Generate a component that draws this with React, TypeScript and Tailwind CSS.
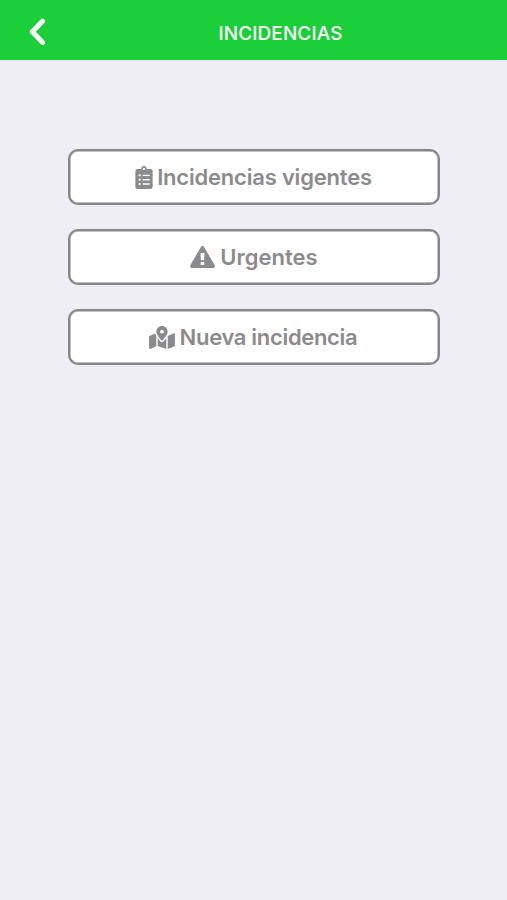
import { FaClipboardList, FaMapMarkedAlt } from "react-icons/fa";

const WarningIcon = ({ className }: { className?: string }) => (
  <svg viewBox="0 0 25 22" className={className} fill="currentColor">
    <path
      fillRule="evenodd"
      d="M10.9.9a1.8 1.8 0 0 1 3.2 0l10.6 18.4a1.8 1.8 0 0 1-1.6 2.7H1.9a1.8 1.8 0 0 1-1.6-2.7ZM10.5 7l.4 7.2h3.2l.4-7.2ZM10.7 15.9v3.2h3.6v-3.2Z"
    />
  </svg>
);

const options = [
  {
    label: "Incidencias vigentes",
    icon: FaClipboardList,
    iconClass: "w-[18px] h-[23px] mr-1",
    labelClass: "mr-px tracking-[-0.2px]",
  },
  {
    label: "Urgentes",
    icon: WarningIcon,
    iconClass: "w-[25px] h-[22px] mr-[5px]",
    labelClass: "tracking-normal",
  },
  {
    label: "Nueva incidencia",
    icon: FaMapMarkedAlt,
    iconClass: "w-[26px] h-[23px] mr-[5px]",
    labelClass: "mr-0.5 tracking-[-0.32px]",
  },
];

const App = () => {
  return (
    <div className="min-h-screen bg-[#efeef4] font-['Inter',sans-serif]">
      {/* Header */}
      <header className="grid h-[60px] grid-cols-[54px_1fr] items-center bg-[#1bcf3b] text-white">
        <button className="flex justify-end pr-2 pt-1" aria-label="Volver">
          <svg
            viewBox="0 0 17 28"
            className="h-7 w-[17px]"
            fill="none"
            stroke="currentColor"
            strokeWidth="5"
            strokeLinecap="round"
            strokeLinejoin="round"
          >
            <path d="M13.5 3.2 3.4 13.8 13.5 24.4" />
          </svg>
        </button>
        <h1 className="pt-2 text-center text-[19px] font-medium tracking-[0.1px]">INCIDENCIAS</h1>
      </header>

      {/* Options */}
      <main className="flex flex-col gap-6 pl-[68px] pr-[67px] pt-[89px]">
        {options.map(({ label, icon: Icon, iconClass, labelClass }) => (
          <button
            key={label}
            className="flex h-14 items-center justify-center rounded-[10px] border-2 border-[#868688] bg-white text-[22px] font-semibold text-[#8b8b8d] shadow-[inset_0_0_0_0.5px_#868688]"
          >
            <Icon className={iconClass} />
            <span className={labelClass}>{label}</span>
          </button>
        ))}
      </main>
    </div>
  );
};

export default App;
